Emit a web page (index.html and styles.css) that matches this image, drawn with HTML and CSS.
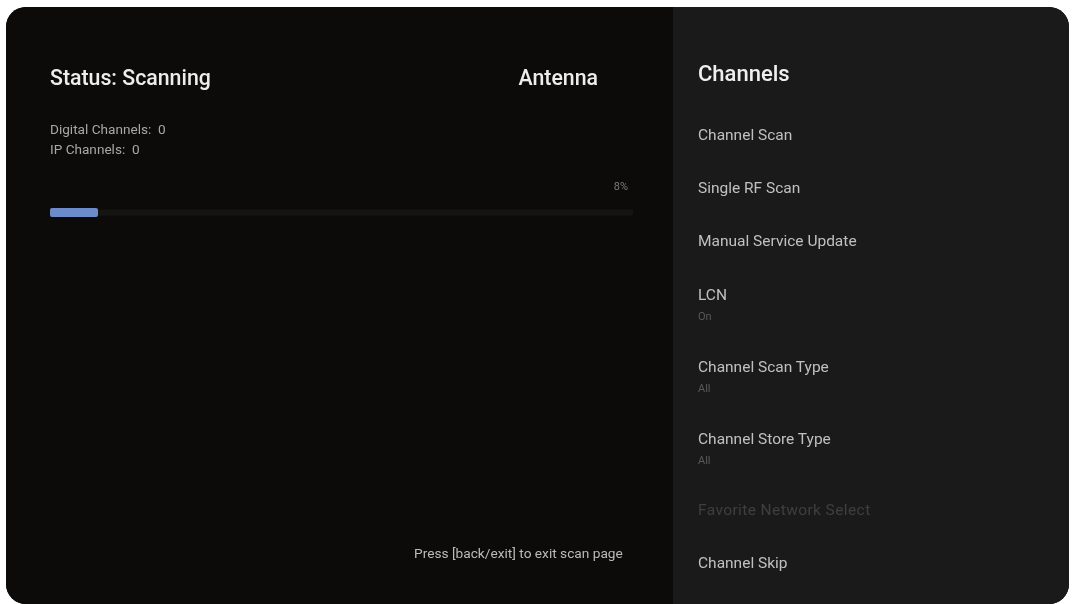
FILE: index.html
```html
<!DOCTYPE html>
<html lang="en">
<head>
<meta charset="utf-8">
<title>Channels</title>
<link rel="stylesheet" href="styles.css">
</head>
<body>
<main class="screen">
  <section class="scan">
    <header class="scan-head">
      <h1 class="status">Status: Scanning</h1>
      <span class="source">Antenna</span>
    </header>
    <div class="counts">
      <p>Digital Channels:&nbsp; 0</p>
      <p>IP Channels:&nbsp; 0</p>
    </div>
    <div class="percent">8%</div>
    <div class="track"><div class="fill"></div></div>
    <p class="hint">Press [back/exit] to exit scan page</p>
  </section>
  <aside class="menu">
    <h2 class="menu-title">Channels</h2>
    <ul class="items">
      <li class="item">Channel Scan</li>
      <li class="item">Single RF Scan</li>
      <li class="item">Manual Service Update</li>
      <li class="item double">LCN<small>On</small></li>
      <li class="item double">Channel Scan Type<small>All</small></li>
      <li class="item double">Channel Store Type<small>All</small></li>
      <li class="item disabled">Favorite Network Select</li>
      <li class="item">Channel Skip</li>
    </ul>
  </aside>
</main>
</body>
</html>
```
FILE: styles.css
```css
* { box-sizing: border-box; }
html, body { margin: 0; height: 100%; background: #fff; overflow: hidden; }
body { padding: 7px 5px 0 6px; font-family: Roboto, "Liberation Sans", sans-serif; }
p, h1, h2, ul { margin: 0; padding: 0; }
.screen {
  display: flex;
  height: 597px;
  border-radius: 20px;
  overflow: hidden;
  background: #0d0b09;
  filter: blur(0.7px);
}
.scan {
  width: 667px;
  padding: 57px 40px 0 44px;
  display: flex;
  flex-direction: column;
  background: #0d0b09;
}
.scan-head { display: flex; justify-content: space-between; padding-right: 35px; }
.status, .source {
  font-size: 21.3px;
  line-height: 27px;
  font-weight: 500;
  color: #efedeb;
}
.counts { margin-top: 28px; font-size: 13.6px; line-height: 20px; color: #a9a7a5; }
.percent { margin-top: 22px; text-align: right; font-size: 11px; line-height: 12px; color: #7c7a78; padding-right: 5px; }
.track { margin-top: 15px; height: 9px; width: 583px; border-radius: 4px; background: linear-gradient(#0d0b09 1px, #141411 2px, #141411 7px, #0d0b09 8px); }
.fill { height: 9px; width: 48px; border-radius: 2px; background: #6c8bc9; }
.hint { margin-top: 328px; padding-left: 364px; white-space: nowrap; font-size: 13.7px; line-height: 16px; color: #bdbbb9; }
.menu { flex: 1; padding: 53px 0 0 25px; background: #1a1a1b; }
.menu-title { font-size: 22px; line-height: 28px; font-weight: 500; color: #efefef; }
.items { list-style: none; margin-top: 20px; }
.item {
  height: 53px;
  display: flex;
  flex-direction: column;
  justify-content: center;
  font-size: 15.5px;
  line-height: 20px;
  color: #c0c0c0;
}
.item.double { height: 72px; padding-top: 8px; }
.item small { font-size: 11px; line-height: 24px; color: #58595b; }
.item.disabled { color: #3e3f42; letter-spacing: 0.4px; }
```
